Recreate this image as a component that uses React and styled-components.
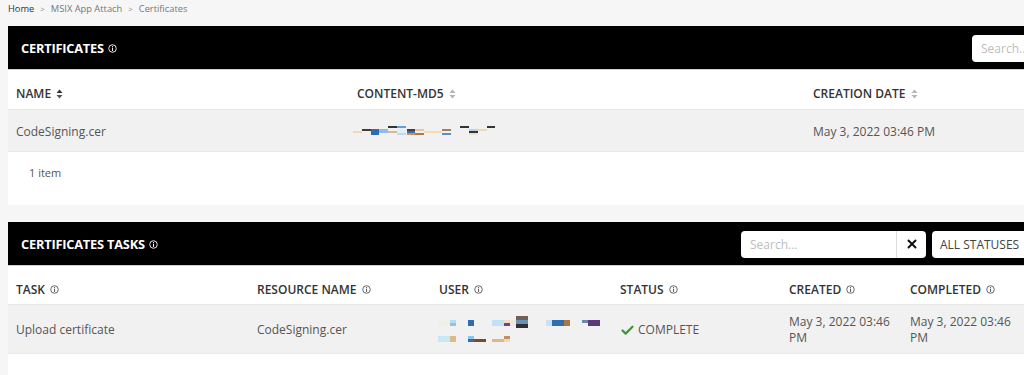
import React from "react";
import styled, { createGlobalStyle } from "styled-components";
import { Check, X } from "lucide-react";

const Global = createGlobalStyle`
  html, body { margin: 0; padding: 0; background: #f6f6f6; overflow: hidden; }
  body { font-family: "Open Sans", "Liberation Sans", sans-serif; }
  * { box-sizing: border-box; }
`;

const Page = styled.div`
  width: 1080px;
  padding: 0 0 0 8px;
  display: flex;
  flex-direction: column;
`;

const Breadcrumb = styled.nav`
  height: 26px;
  display: flex;
  align-items: flex-start;
  gap: 6px;
  padding-top: 2px;
  font-size: 9.3px;
  line-height: 14px;
  color: #777;
`;
const Crumb = styled.span`
  color: ${(p) => (p.$home ? "#333" : "#777")};
`;
const Sep = styled.span`
  color: #888;
  font-size: 8px;
`;

const Card = styled.section`
  background: #fff;
  display: flex;
  flex-direction: column;
  margin-bottom: ${(p) => p.$gap || 0}px;
`;

const Header = styled.header`
  height: 44px;
  background: #000;
  display: flex;
  align-items: center;
  justify-content: space-between;
  padding: 1px 0 0 13px;
  border-bottom: 1px solid #cfcfcf;
`;
const Title = styled.h2`
  margin: 0;
  color: #fff;
  font-size: 12.8px;
  font-weight: 700;
  letter-spacing: -0.2px;
  display: flex;
  align-items: center;
  gap: 4px;
`;
const Tools = styled.div`
  display: flex;
  align-items: center;
  gap: 6px;
  padding-right: ${(p) => p.$pr}px;
`;
const SearchBox = styled.div`
  width: ${(p) => p.$w}px;
  height: 27px;
  background: #fff;
  border-radius: ${(p) => (p.$joined ? "4px 0 0 4px" : "4px")};
  display: flex;
  align-items: center;
  padding-left: 9px;
  font-size: 12px;
  color: #bdbdbd;
`;
const Joined = styled.div`
  display: flex;
`;
const ClearBtn = styled.button`
  width: 30px;
  height: 27px;
  background: #fff;
  border: 0;
  border-left: 1px solid #ddd;
  border-radius: 0 4px 4px 0;
  display: flex;
  align-items: center;
  justify-content: center;
  padding: 0;
  color: #111;
`;
const Select = styled.div`
  width: 120px;
  height: 27px;
  background: #fff;
  border-radius: 4px;
  display: flex;
  align-items: center;
  padding-left: 8px;
  font-size: 12px;
  color: #444;
`;

const Row = styled.div`
  display: grid;
  grid-template-columns: ${(p) => p.$cols};
  height: ${(p) => p.$h}px;
  background: ${(p) => (p.$alt ? "#f1f1f1" : "#fff")};
  border-bottom: 1px solid ${(p) => (p.$alt ? "#e9e9e9" : "#e6e6e6")};
  align-items: center;
`;
const HeadCell = styled.div`
  padding: ${(p) => p.$pt || 6}px 8px 0;
  font-size: 12px;
  font-weight: 600;
  color: #333;
  display: flex;
  align-items: center;
  gap: 5px;
  white-space: nowrap;
`;
const Cell = styled.div`
  padding: ${(p) => p.$pt || 0}px 8px 0;
  font-size: 12px;
  line-height: 16px;
  color: #555;
  display: flex;
  align-items: center;
  gap: 3px;
`;
const Footer = styled.div`
  height: 53px;
  display: flex;
  align-items: flex-start;
  padding: 13px 0 0 21px;
  font-size: 11px;
  line-height: 16px;
  color: #555;
`;
const Status = styled.span`
  text-transform: uppercase;
  font-size: 12px;
  color: #555;
`;
const Redacted = styled.svg`
  display: block;
  margin-left: ${(p) => p.$ml || 0}px;
`;
const Filler = styled.div`
  height: 40px;
  background: #fff;
`;

const Info = ({ color = "#555" }) => (
  <svg width="9" height="9" viewBox="0 0 10 10">
    <circle cx="5" cy="5" r="4.2" fill="none" stroke={color} strokeWidth="1" />
    <rect x="4.5" y="2.2" width="1.1" height="1.1" fill={color} />
    <rect x="4.5" y="4" width="1.1" height="3.8" fill={color} />
  </svg>
);

const Sort = ({ active }) => (
  <svg width="7" height="10" viewBox="0 0 7 10">
    <path d="M3.5 0.5 L6.5 4 L0.5 4 Z" fill={active ? "#333" : "#b5b5b5"} />
    <path d="M3.5 9.5 L6.5 6 L0.5 6 Z" fill={active ? "#555" : "#b5b5b5"} />
  </svg>
);

const md5Rects = [
  [353, 131, 9, 2, "#f3d9b0"],
  [362, 129, 9, 2, "#4a3a2a"],
  [371, 129, 8, 6, "#2e6db0"],
  [379, 129, 9, 4, "#8fbde8"],
  [388, 126, 9, 2, "#333"],
  [397, 126, 9, 2, "#5fa0dc"],
  [388, 131, 9, 2, "#d8b896"],
  [397, 129, 9, 4, "#e0eef8"],
  [397, 133, 9, 2, "#b8dcf2"],
  [407, 129, 8, 2, "#4a3a4a"],
  [407, 131, 8, 2, "#3a70b0"],
  [407, 133, 8, 2, "#c0956a"],
  [415, 129, 9, 2, "#e8c79a"],
  [415, 133, 9, 2, "#b07a40"],
  [424, 131, 18, 2, "#f3dcb5"],
  [442, 129, 9, 2, "#a08060"],
  [442, 133, 9, 2, "#5a90c8"],
  [460, 126, 9, 2, "#333"],
  [469, 129, 9, 2, "#b0d4f0"],
  [469, 131, 9, 2, "#333"],
  [469, 133, 9, 2, "#f0e0c8"],
  [478, 129, 9, 2, "#f0d8b0"],
  [487, 126, 8, 2, "#333"],
];

const userRects = [
  [438, 319, 12, 6, "#f0efe8"],
  [450, 319, 6, 3, "#b4dcf4"],
  [450, 322, 6, 3, "#8cc4ea"],
  [468, 319, 6, 6, "#2e6db0"],
  [492, 319, 12, 6, "#c0e0f4"],
  [504, 319, 6, 3, "#f0e0c0"],
  [504, 322, 6, 3, "#7a3e90"],
  [510, 319, 6, 6, "#f0e8d8"],
  [516, 315, 12, 4, "#706058"],
  [516, 319, 12, 4, "#6a90b8"],
  [516, 323, 12, 4, "#303030"],
  [546, 319, 6, 6, "#c8e4f4"],
  [552, 319, 12, 6, "#2e6db0"],
  [564, 319, 6, 6, "#a87840"],
  [582, 319, 6, 3, "#6a88b0"],
  [588, 319, 12, 6, "#5a3a78"],
  [438, 335, 12, 6, "#c8e8f4"],
  [450, 335, 6, 6, "#e0b888"],
  [468, 335, 6, 3, "#8cc4ea"],
  [468, 338, 6, 3, "#2e6db0"],
  [474, 338, 12, 3, "#7a4a30"],
  [492, 338, 12, 3, "#e0b888"],
  [504, 335, 6, 3, "#c09060"],
  [504, 338, 6, 3, "#f0d8b0"],
];

const Pixels = ({ rects, ox, oy, w, h, ml }) => (
  <Redacted width={w} height={h} viewBox={`0 0 ${w} ${h}`} $ml={ml}>
    {rects.map(([x, y, rw, rh, c], i) => (
      <rect key={i} x={x - ox} y={y - oy} width={rw} height={rh} fill={c} />
    ))}
  </Redacted>
);

const certCols = "341px 456px 1fr";
const taskCols = "241px 182px 181px 169px 121px 121px 1fr";

export default function App() {
  return (
    <>
      <Global />
      <Page>
        <Breadcrumb>
          <Crumb $home>Home</Crumb>
          <Sep>&gt;</Sep>
          <Crumb>MSIX App Attach</Crumb>
          <Sep>&gt;</Sep>
          <Crumb>Certificates</Crumb>
        </Breadcrumb>

        <Card $gap={17}>
          <Header>
            <Title>
              CERTIFICATES <Info color="#fff" />
            </Title>
            <Tools $pr={18}>
              <SearchBox $w={90}>Search...</SearchBox>
            </Tools>
          </Header>
          <Row $cols={certCols} $h={40}>
            <HeadCell $pt={8}>
              NAME <Sort active />
            </HeadCell>
            <HeadCell $pt={8}>
              CONTENT-MD5 <Sort />
            </HeadCell>
            <HeadCell $pt={8}>
              CREATION DATE <Sort />
            </HeadCell>
          </Row>
          <Row $cols={certCols} $h={42} $alt>
            <Cell $pt={2}>CodeSigning.cer</Cell>
            <Cell>
              <Pixels rects={md5Rects} ox={353} oy={125} w={145} h={12} ml={-4} />
            </Cell>
            <Cell $pt={2}>May 3, 2022 03:46 PM</Cell>
          </Row>
          <Footer>1 item</Footer>
        </Card>

        <Card>
          <Header>
            <Title>
              CERTIFICATES TASKS <Info color="#fff" />
            </Title>
            <Tools $pr={28}>
              <Joined>
                <SearchBox $w={155} $joined>
                  Search...
                </SearchBox>
                <ClearBtn>
                  <X size={14} strokeWidth={3.4} />
                </ClearBtn>
              </Joined>
              <Select>ALL STATUSES</Select>
            </Tools>
          </Header>
          <Row $cols={taskCols} $h={39}>
            <HeadCell $pt={8}>
              TASK <Info />
            </HeadCell>
            <HeadCell $pt={8}>
              RESOURCE NAME <Info />
            </HeadCell>
            <HeadCell $pt={8}>
              USER <Info />
            </HeadCell>
            <HeadCell $pt={8}>
              STATUS <Info />
            </HeadCell>
            <HeadCell $pt={8}>
              CREATED <Info />
            </HeadCell>
            <HeadCell $pt={8}>
              COMPLETED <Info />
            </HeadCell>
          </Row>
          <Row $cols={taskCols} $h={49} $alt>
            <Cell $pt={2}>Upload certificate</Cell>
            <Cell $pt={2}>CodeSigning.cer</Cell>
            <Cell>
              <Pixels rects={userRects} ox={438} oy={313} w={166} h={30} ml={-1} />
            </Cell>
            <Cell $pt={2}>
              <Check size={15} strokeWidth={3.6} color="#3a9a3a" />
              <Status>Complete</Status>
            </Cell>
            <Cell $pt={2}>May 3, 2022 03:46 PM</Cell>
            <Cell $pt={2}>May 3, 2022 03:46 PM</Cell>
          </Row>
          <Filler />
        </Card>
      </Page>
    </>
  );
}
